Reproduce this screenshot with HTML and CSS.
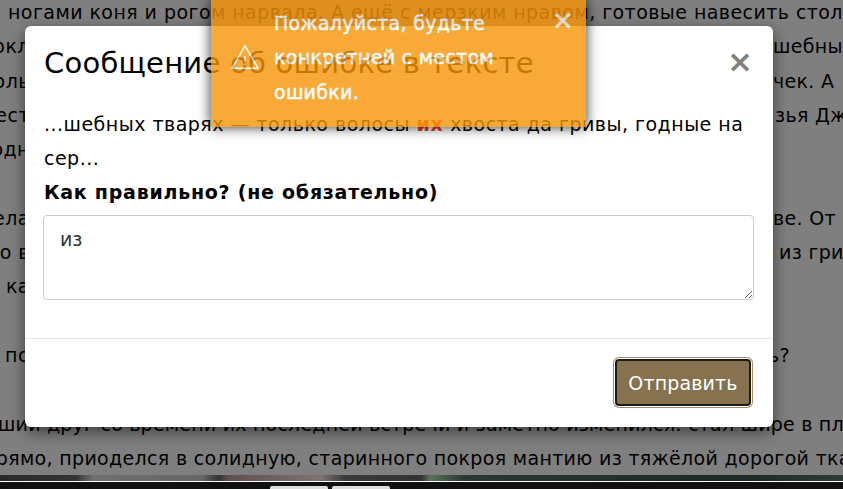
FILE: index.html
```html
<!DOCTYPE html>
<html lang="ru">
<head>
<meta charset="utf-8">
<title>Сообщение об ошибке в тексте</title>
<link rel="stylesheet" href="styles.css">
</head>
<body>
<main class="page">
  <article class="story">
    <p class="line top">, ногами коня и рогом нарвала. А ещё с мерзким нравом, готовые навесить столько</p>
    <p class="line"><span class="lead">покл</span><span class="tail">шебных</span></p>
    <p class="line"><span class="lead">толь</span><span class="tail">чек. А</span></p>
    <p class="line"><span class="lead">мест</span><span class="tail in-s">зья Дж</span></p>
    <p class="line"><span class="lead">одн</span></p>
    <p class="line">&nbsp;</p>
    <p class="line"><span class="lead">дела</span><span class="tail">ве. От з</span></p>
    <p class="line"><span class="lead">но в</span><span class="tail in-l">из гри</span></p>
    <p class="line"><span class="lead">. ка</span></p>
    <p class="line">&nbsp;</p>
    <p class="line"><span class="lead">и по</span><span class="tail out">ь?</span></p>
    <p class="line">&nbsp;</p>
    <p class="line low">ший друг со времени их последней встречи и заметно изменился: стал шире в плечах</p>
    <p class="line lower">прямо, приоделся в солидную, старинного покроя мантию из тяжёлой дорогой ткани</p>
  </article>
</main>

<div class="backdrop"></div>

<footer class="site-footer">
  <div class="footer-band"></div>
  <div class="footer-rule"></div>
  <div class="footer-tabs"><span class="footer-tab"></span><span class="footer-tab"></span></div>
</footer>

<section class="modal">
  <header class="modal-header">
    <h2 class="modal-title">Сообщение об ошибке в тексте</h2>
    <span class="modal-close">×</span>
  </header>
  <div class="modal-body">
    <p class="quote">...шебных тварях — только волосы <b class="mark">их</b> хвоста да гривы, годные на сер...</p>
    <label class="field-label" for="fix">Как правильно? (не обязательно)</label>
    <textarea class="field" id="fix">из</textarea>
  </div>
  <footer class="modal-footer">
    <button class="send" type="button">Отправить</button>
  </footer>
</section>

<aside class="toast">
  <svg class="toast-icon" viewBox="0 0 32 28" width="30" height="26" aria-hidden="true">
    <path d="M16 2 L30 26 H2 Z" fill="none" stroke="#fff" stroke-width="1.6" stroke-linejoin="round"/>
    <path d="M16 13 V19 M16 21 V23" fill="none" stroke="#fff" stroke-width="1.6"/>
  </svg>
  <span class="toast-close">×</span>
  <div class="toast-message">Пожалуйста, будьте конкретней с местом ошибки.</div>
</aside>
</body>
</html>
```
FILE: styles.css
```css
* { box-sizing: border-box; }
html, body { margin: 0; height: 489px; overflow: hidden; }
body {
  position: relative;
  width: 843px;
  background: #fff;
  color: #000;
  font: 19px/34.3px "DejaVu Sans", sans-serif;
  letter-spacing: .48px;
}
.page { height: 489px; overflow: hidden; }
.story { margin-top: -5px; }
.line { margin: 0; white-space: nowrap; display: flex; overflow: hidden; }
.top { letter-spacing: .44px; text-indent: -5px; }
.low { letter-spacing: .21px; margin-left: -2px; }
.lower { letter-spacing: .33px; margin-left: -17px; }
.lead { width: 30px; flex: none; display: flex; justify-content: flex-end; }
.tail { margin-left: 743px; flex: none; letter-spacing: .3px; }
.in-s { margin-left: 745px; }
.in-l { margin-left: 749px; }
.out { margin-left: 738px; }
.backdrop {
  position: absolute;
  inset: 0;
  background: rgba(0, 0, 0, .5);
}
.site-footer {
  position: absolute;
  left: 0;
  right: 0;
  bottom: 0;
  height: 14px;
  background: #111;
  display: flex;
  flex-direction: column;
}
.footer-band {
  height: 6px;
  background: linear-gradient(90deg, #2a2a2a 0, #333 9%, #6f6f6f 11%, #666 24%, #333 26%, #5f4f4c 27%, #807472 38%, #3a3a3a 41%, #333 50%, #5c7259 51%, #2a3833 55%, #1c2a27 88%, #2d3c38 100%);
}
.footer-rule { height: 1px; background: #fff; }
.footer-tabs {
  flex: 1;
  display: flex;
  gap: 4px;
  padding: 4px 0 0 270px;
}
.footer-tab { width: 58px; background: #ddd; border-radius: 2px 2px 0 0; }
.modal {
  position: absolute;
  left: 25px;
  top: 26px;
  width: 748px;
  height: 401px;
  background: #fff;
  border-radius: 6px;
  box-shadow: 0 5px 15px rgba(0, 0, 0, .5);
  display: flex;
  flex-direction: column;
}
.modal-header {
  display: flex;
  justify-content: space-between;
  align-items: flex-start;
  padding: 18px 19px 0;
  height: 81px;
  flex: none;
}
.modal-title { margin: 0; font-size: 29px; font-weight: 400; line-height: 38px; letter-spacing: .23px; }
.modal-close {
  font-size: 31px;
  line-height: 34px;
  font-weight: 700;
  color: #808080;
  letter-spacing: 0;
  margin-right: 1px;
}
.modal-body { flex: 1; padding: 0 19px; }
.quote { margin: 0; }
.mark { color: #e5412d; letter-spacing: .8px; }
.field-label { display: block; margin-top: -1px; font-weight: 700; letter-spacing: .75px; }
.field {
  display: block;
  width: 711px;
  height: 85px;
  margin: 6px 0 0 -1px;
  padding: 11px 16px;
  border: 1px solid #ccc;
  border-radius: 4px;
  font: 19px/24px "DejaVu Sans", sans-serif;
  color: #333;
  outline: 0;
}
.modal-footer {
  height: 89px;
  flex: none;
  display: flex;
  justify-content: flex-end;
  align-items: flex-start;
  padding: 20px 22px 0;
  border-top: 1px solid #e5e5e5;
}
.send {
  width: 136px;
  height: 47px;
  border: 2px solid #1f1b14;
  border-radius: 4px;
  background: #87724f;
  color: #fff;
  font: 19px/24px "DejaVu Sans", sans-serif;
  letter-spacing: .15px;
  box-shadow: 0 0 0 1px #fff, 0 0 0 2px #a08c6c;
  padding: 0;
}
.toast {
  position: absolute;
  left: 211px;
  top: 0;
  width: 375px;
  height: 127px;
  padding: 6px 15px 0 63px;
  background: #f89406;
  opacity: .8;
  color: #fff;
  letter-spacing: .3px;
  box-shadow: 0 0 12px #000;
}
.toast-message { padding-right: 30px; -webkit-text-stroke: .45px #fff; }
.toast-icon { position: absolute; left: 19px; top: 44px; }
.toast-close {
  float: right;
  position: relative;
  top: 1px;
  right: -3px;
  font-size: 27px;
  line-height: 26px;
  font-weight: 700;
  letter-spacing: 0;
  opacity: .85;
}
```
